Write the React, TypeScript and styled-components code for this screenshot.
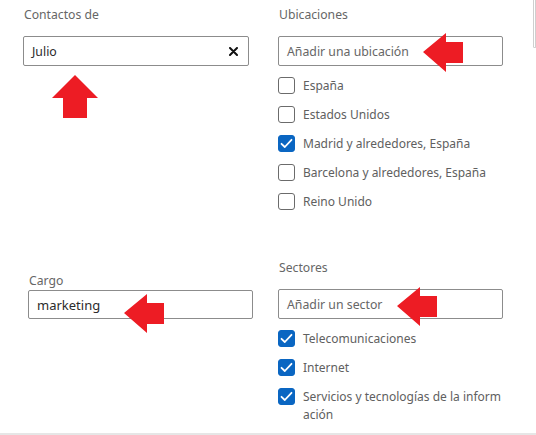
import React from "react";
import styled, { createGlobalStyle } from "styled-components";

const Global = createGlobalStyle`
  html, body { margin: 0; padding: 0; background: #fff; }
  body { width: 536px; height: 435px; overflow: hidden; font-family: "Noto Sans", "Open Sans", sans-serif; }
  #root { width: 536px; height: 435px; }
`;

const Page = styled.div`
  position: relative;
  width: 536px;
  height: 435px;
  box-sizing: border-box;
  border-bottom: 2px solid #e6e6e6;
  display: grid;
  grid-template-columns: 226px 225px 1fr;
  grid-template-rows: 259px 1fr;
  column-gap: 29px;
  padding-left: 23px;
  overflow: hidden;
`;

const Field = styled.div<{ $offsetX?: number; $offsetY?: number; $width?: number }>`
  position: relative;
  display: flex;
  flex-direction: column;
  padding-top: ${(p) => p.$offsetY ?? 0}px;
  margin-left: ${(p) => p.$offsetX ?? 0}px;
  justify-self: start;
  width: ${(p) => (p.$width ? `${p.$width}px` : "100%")};
`;

const Label = styled.div<{ $gap: number }>`
  font-size: 12.2px;
  line-height: 17px;
  color: #666;
  margin-bottom: ${(p) => p.$gap}px;
  padding-left: 1px;
`;

const InputBox = styled.div<{ $h: number }>`
  box-sizing: border-box;
  height: ${(p) => p.$h}px;
  border: 1px solid #8c8c8c;
  border-radius: 2px;
  display: flex;
  align-items: center;
  justify-content: space-between;
  padding: 0 10px 0 8px;
  font-size: 12.3px;
`;

const Value = styled.span<{ $size?: number }>`
  color: #2b2b2b;
  font-size: ${(p) => p.$size ?? 12.3}px;
`;

const Placeholder = styled.span`
  color: #666;
`;

const List = styled.div`
  display: flex;
  flex-direction: column;
  gap: 11px;
  margin-top: 11px;
`;

const Option = styled.label`
  display: flex;
  align-items: flex-start;
  gap: 8px;
  font-size: 12px;
  line-height: 18px;
  color: #606060;
`;

const OptionText = styled.span`
  word-break: break-all;
  max-width: 200px;
`;

const Box = styled.span<{ $checked: boolean }>`
  flex: none;
  box-sizing: border-box;
  width: 17px;
  height: 17px;
  border-radius: 3px;
  border: 1px solid ${(p) => (p.$checked ? "#0a66c2" : "#6b6b6b")};
  background: ${(p) => (p.$checked ? "#0a66c2" : "#fff")};
  display: flex;
  align-items: center;
  justify-content: center;
`;

const Arrow = styled.svg<{ $x: number; $y: number }>`
  position: absolute;
  left: ${(p) => p.$x}px;
  top: ${(p) => p.$y}px;
  overflow: visible;
`;

const SideCard = styled.div`
  margin-top: -6px;
  height: 54px;
  margin-left: 1px;
  box-sizing: border-box;
  border: 1px solid #cfcfcf;
  border-top: 3px solid #0a66c2;
  border-radius: 5px;
`;

const Check = ({ checked }: { checked: boolean }) => (
  <Box $checked={checked}>
    {checked && (
      <svg width="13" height="11" viewBox="0 0 13 11">
        <path d="M1.5 5.8 L4.8 9 L11.5 1.8" fill="none" stroke="#fff" strokeWidth="1.8" strokeLinecap="round" strokeLinejoin="round" />
      </svg>
    )}
  </Box>
);

const Opt = ({ label, checked }: { label: string; checked?: boolean }) => (
  <Option>
    <Check checked={!!checked} />
    <OptionText>{label}</OptionText>
  </Option>
);

const RED = "#ed1c24";

const LeftArrow = ({ x, y }: { x: number; y: number }) => (
  <Arrow $x={x} $y={y} width="65" height="40" viewBox="0 0 65 40">
    <path d="M0 19 L23 0 L23 9 L40 9 L40 30 L23 30 L23 39 Z" fill={RED} />
  </Arrow>
);

export default function App() {
  return (
    <>
      <Global />
      <Page>
        <Field $offsetY={6}>
          <Label $gap={13}>Contactos de</Label>
          <InputBox $h={30}>
            <Value>Julio</Value>
            <svg width="9" height="9" viewBox="0 0 9 9">
              <path d="M1 1 L8 8 M8 1 L1 8" stroke="#111" strokeWidth="2" strokeLinecap="round" />
            </svg>
          </InputBox>
          <Arrow $x={29} $y={75} width="47" height="44" viewBox="0 0 47 44">
            <path d="M23 0 L46 23 L35 23 L35 43 L11 43 L11 23 L0 23 Z" fill={RED} />
          </Arrow>
        </Field>
        <Field $offsetY={6}>
          <Label $gap={13}>Ubicaciones</Label>
          <InputBox $h={30}>
            <Placeholder>Añadir una ubicación</Placeholder>
          </InputBox>
          <LeftArrow x={145} y={33} />
          <List>
            <Opt label="España" />
            <Opt label="Estados Unidos" />
            <Opt label="Madrid y alrededores, España" checked />
            <Opt label="Barcelona y alrededores, España" />
            <Opt label="Reino Unido" />
          </List>
        </Field>
        <SideCard />
        <Field $offsetX={5} $offsetY={13} $width={225}>
          <Label $gap={1}>Cargo</Label>
          <InputBox $h={29}>
            <Value $size={13}>marketing</Value>
          </InputBox>
          <LeftArrow x={96} y={35} />
        </Field>
        <Field>
          <Label $gap={13}>Sectores</Label>
          <InputBox $h={30}>
            <Placeholder>Añadir un sector</Placeholder>
          </InputBox>
          <LeftArrow x={119} y={28} />
          <List>
            <Opt label="Telecomunicaciones" checked />
            <Opt label="Internet" checked />
            <Opt label="Servicios y tecnologías de la información" checked />
          </List>
        </Field>
      </Page>
    </>
  );
}
